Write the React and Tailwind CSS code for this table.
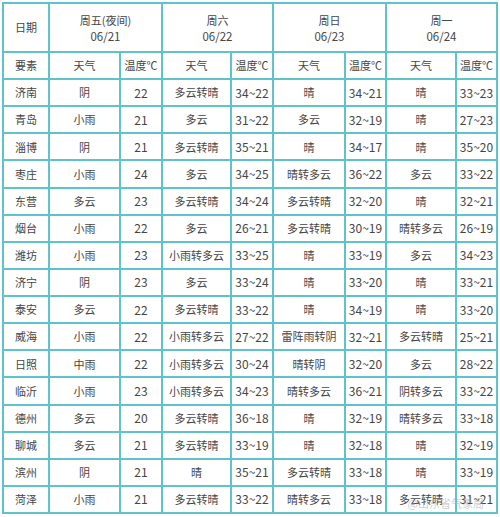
import React from "react";

const days = [
  { name: "周五(夜间)", date: "06/21" },
  { name: "周六", date: "06/22" },
  { name: "周日", date: "06/23" },
  { name: "周一", date: "06/24" },
];

const rows = [
  ["济南", "阴", "22", "多云转晴", "34~22", "晴", "34~21", "晴", "33~23"],
  ["青岛", "小雨", "21", "多云", "31~22", "多云", "32~19", "晴", "27~23"],
  ["淄博", "阴", "21", "多云转晴", "35~21", "晴", "34~17", "晴", "35~20"],
  ["枣庄", "小雨", "24", "多云", "34~25", "晴转多云", "36~22", "多云", "33~22"],
  ["东营", "多云", "23", "多云转晴", "34~24", "多云转晴", "32~20", "晴", "32~21"],
  ["烟台", "小雨", "22", "多云", "26~21", "多云转晴", "30~19", "晴转多云", "26~19"],
  ["潍坊", "小雨", "23", "小雨转多云", "33~25", "晴", "33~19", "多云", "34~23"],
  ["济宁", "阴", "23", "多云", "33~24", "晴", "33~20", "晴", "33~21"],
  ["泰安", "多云", "22", "多云转晴", "33~22", "晴", "34~19", "晴", "33~20"],
  ["威海", "小雨", "22", "小雨转多云", "27~22", "雷阵雨转阴", "32~21", "多云转晴", "25~21"],
  ["日照", "中雨", "22", "小雨转多云", "30~24", "晴转阴", "32~20", "多云", "28~22"],
  ["临沂", "小雨", "23", "小雨转多云", "34~23", "晴转多云", "36~21", "阴转多云", "33~22"],
  ["德州", "多云", "20", "多云转晴", "36~18", "晴", "32~19", "晴转多云", "33~18"],
  ["聊城", "多云", "21", "多云转晴", "33~19", "晴", "32~18", "晴", "32~19"],
  ["滨州", "阴", "21", "晴", "35~21", "多云转晴", "33~18", "晴", "33~19"],
  ["菏泽", "小雨", "21", "多云转晴", "33~22", "晴转多云", "33~18", "多云转晴", "31~21"],
];

const cell = "bg-white flex items-center justify-center text-[#454545]";

export default function App() {
  return (
    <div className="w-[500px] h-[517px] bg-white pl-[2px] pt-[2px]" style={{ fontFamily: '"Microsoft YaHei", "Noto Sans CJK SC", sans-serif' }}>
      <div className="relative w-[496px] h-[512px] bg-[#5ec3cb] p-[2px] grid gap-[2px] grid-cols-[44px_69px_40px_67px_40px_70px_39px_68px_39px] grid-rows-[47px_25px_repeat(16,1fr)] text-[11px]">
        <div className={cell}>日期</div>
        {days.map((d) => (
          <div key={d.date} className={`${cell} col-span-2 flex-col leading-[16px] pt-[1px]`}>
            <span>{d.name}</span>
            <span className="text-[11.5px]">{d.date}</span>
          </div>
        ))}

        <div className={cell}>要素</div>
        {days.map((d) => (
          <React.Fragment key={"h" + d.date}>
            <div className={cell}>天气</div>
            <div className={cell}>温度℃</div>
          </React.Fragment>
        ))}

        {rows.map((r) =>
          r.map((v, i) => (
            <div key={r[0] + i} className={`${cell} ${/\d/.test(v) ? "text-[12px]" : ""}`}>
              {v}
            </div>
          ))
        )}

        {/* watermark */}
        <div className="absolute right-[14px] bottom-[3px] text-[11px] text-[#a0a0a0] opacity-50 pointer-events-none">
          @山东省气象局
        </div>
      </div>
    </div>
  );
}
